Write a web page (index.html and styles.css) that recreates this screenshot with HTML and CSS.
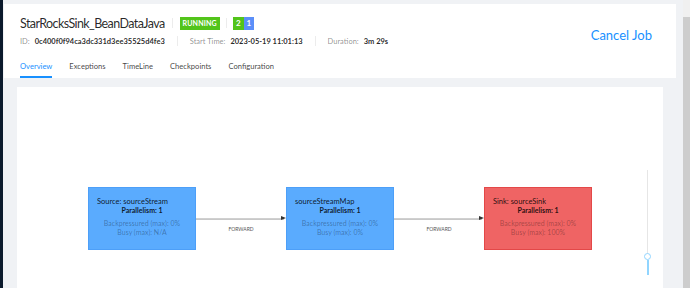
FILE: index.html
```html
<!DOCTYPE html>
<html lang="en">

<head>
    <meta charset="UTF-8">
    <title>StarRocksSink_BeanDataJava</title>
    <link rel="stylesheet" href="styles.css">
</head>

<body>
    <div class="sider"></div>

    <div class="main">
        <div class="job-header">
            <div class="job-info">
                <div class="title-row">
                    <h1 class="job-name">StarRocksSink_BeanDataJava</h1>
                    <span class="divider"></span>
                    <span class="status">RUNNING</span>
                    <span class="divider"></span>
                    <span class="tasks"><span class="task-running">2</span><span class="task-other">1</span></span>
                </div>
                <div class="meta-row">
                    <span class="meta-label">ID:</span>
                    <span class="meta-value">0c400f0f94ca3dc331d3ee35525d4fe3</span>
                    <span class="divider"></span>
                    <span class="meta-label">Start Time:</span>
                    <span class="meta-value">2023-05-19 11:01:13</span>
                    <span class="divider"></span>
                    <span class="meta-label">Duration:</span>
                    <span class="meta-value">3m 29s</span>
                </div>
                <div class="tabs">
                    <a class="tab active">Overview</a>
                    <a class="tab">Exceptions</a>
                    <a class="tab">TimeLine</a>
                    <a class="tab">Checkpoints</a>
                    <a class="tab">Configuration</a>
                </div>
            </div>
            <a class="cancel-job">Cancel Job</a>
        </div>

        <div class="graph-card">
            <div class="graph">
                <div class="node">
                    <div class="node-name">Source: sourceStream</div>
                    <div class="node-parallelism">Parallelism: 1</div>
                    <div class="node-metrics">
                        <div>Backpressured (max): 0%</div>
                        <div>Busy (max): N/A</div>
                    </div>
                </div>
                <div class="edge">
                    <div class="edge-line"></div>
                    <div class="edge-label">FORWARD</div>
                </div>
                <div class="node">
                    <div class="node-name">sourceStreamMap</div>
                    <div class="node-parallelism">Parallelism: 1</div>
                    <div class="node-metrics">
                        <div>Backpressured (max): 0%</div>
                        <div>Busy (max): 0%</div>
                    </div>
                </div>
                <div class="edge">
                    <div class="edge-line"></div>
                    <div class="edge-label">FORWARD</div>
                </div>
                <div class="node busy">
                    <div class="node-name">Sink: sourceSink</div>
                    <div class="node-parallelism">Parallelism: 1</div>
                    <div class="node-metrics">
                        <div>Backpressured (max): 0%</div>
                        <div>Busy (max): 100%</div>
                    </div>
                </div>
            </div>

            <div class="zoom-slider">
                <div class="slider-rail"></div>
                <div class="slider-track"></div>
                <div class="slider-handle"></div>
            </div>
        </div>
    </div>

    <div class="scrollbar">
        <div class="scrollbar-thumb"></div>
    </div>
</body>

</html>
```

FILE: styles.css
```css
body {
    margin: 0;
    height: 288px;
    overflow: hidden;
    display: flex;
    font-family: Lato, "Open Sans", sans-serif;
    background-color: #f0f2f5;
    color: rgba(0, 0, 0, 0.85);
}

.sider {
    width: 3px;
    background-color: #0b1a2c;
}

.main {
    flex: 1;
    display: flex;
    flex-direction: column;
    padding-top: 4px;
    min-width: 0;
}

.job-header {
    margin: 0 7px 0 1px;
    height: 74px;
    flex-shrink: 0;
    background: #fff;
    display: flex;
    justify-content: space-between;
    padding-left: 16px;
    box-sizing: border-box;
}

.title-row {
    display: flex;
    align-items: center;
    height: 18px;
    margin-top: 10px;
}

.job-name {
    margin: 0;
    font-size: 12.5px;
    font-weight: 400;
    letter-spacing: -0.6px;
    color: rgba(0, 0, 0, 0.85);
}

.divider {
    display: inline-block;
    width: 1px;
    height: 10px;
    background: #ececec;
    margin: 0 7px;
}

.status {
    background: #52c41a;
    color: #fff;
    font-size: 7px;
    font-weight: 700;
    line-height: 13px;
    padding: 0 3px;
    letter-spacing: 0.2px;
}

.status + .divider {
    margin: 0 6px;
}

.tasks {
    display: flex;
    font-size: 8px;
    font-weight: 700;
    line-height: 13px;
    color: #fff;
}

.task-running {
    background: #52c41a;
    padding: 0 3px;
}

.task-other {
    background: #5b8ff9;
    padding: 0 3px;
}

.meta-row {
    display: flex;
    align-items: center;
    font-size: 7.5px;
    margin-top: 2px;
    height: 14px;
}

.meta-label {
    color: rgba(0, 0, 0, 0.45);
    margin-right: 5px;
}

.meta-value {
    font-weight: 700;
    color: rgba(0, 0, 0, 0.85);
}

.meta-row .divider {
    margin: 0 12px;
}

.tabs {
    display: flex;
    gap: 17px;
    margin-top: 13px;
}

.tab {
    font-size: 7.6px;
    line-height: 10px;
    color: rgba(0, 0, 0, 0.75);
    padding: 0 0 5px;
    border-bottom: 2px solid transparent;
}

.tab.active {
    color: #1890ff;
    border-bottom-color: #1890ff;
}

.cancel-job {
    color: #1890ff;
    font-size: 13px;
    margin: 23px 24px 0 0;
    height: 20px;
}

.graph-card {
    position: relative;
    flex: 1;
    background: #fff;
    margin: 9px 20px 0 14px;
}

.graph {
    display: flex;
    align-items: flex-start;
    padding: 100px 0 0 71px;
}

.node {
    width: 108px;
    height: 63px;
    box-sizing: border-box;
    background: #5aabfe;
    border: 1px solid #4d9ff8;
    padding: 9px 0 0 8px;
    font-size: 7.5px;
    color: rgba(0, 0, 0, 0.85);
}

.node.busy {
    background: #ef6464;
    border-color: #e34848;
}

.node-name {
    line-height: 9px;
}

.node-parallelism {
    font-weight: 700;
    font-size: 7px;
    text-align: center;
    margin-left: -8px;
    line-height: 9px;
}

.node-metrics {
    margin: 4px 0 0 -8px;
    font-size: 7px;
    text-align: center;
    line-height: 9px;
    color: rgba(0, 0, 0, 0.32);
}

.edge {
    width: 90px;
    padding-top: 31px;
}

.edge-line {
    position: relative;
    height: 1px;
    background: #c8c8c8;
    border-top: 1px solid #d0d0d0;
    margin-right: 2px;
}

.edge-line::after {
    content: "";
    position: absolute;
    right: -2px;
    top: -3px;
    border-left: 5px solid #333;
    border-top: 2px solid transparent;
    border-bottom: 2px solid transparent;
}

.edge-label {
    font-size: 5px;
    text-align: center;
    color: #555;
    margin-top: 6px;
}

.zoom-slider {
    position: absolute;
    left: 627px;
    top: 83px;
    width: 8px;
    height: 106px;
}

.slider-rail {
    position: absolute;
    left: 3px;
    top: 0;
    width: 1px;
    height: 84px;
    background: #e6e6e6;
}

.slider-track {
    position: absolute;
    left: 3px;
    top: 90px;
    width: 2px;
    height: 15px;
    background: #91d5ff;
}

.slider-handle {
    position: absolute;
    left: 0;
    top: 83px;
    width: 5px;
    height: 5px;
    border: 1.5px solid #91d5ff;
    border-radius: 50%;
    background: #fff;
}

.scrollbar {
    width: 7px;
    padding-top: 17px;
    background: #f0f0f0;
}

.scrollbar-thumb {
    height: 271px;
    background: #cdcdcd;
}
```
